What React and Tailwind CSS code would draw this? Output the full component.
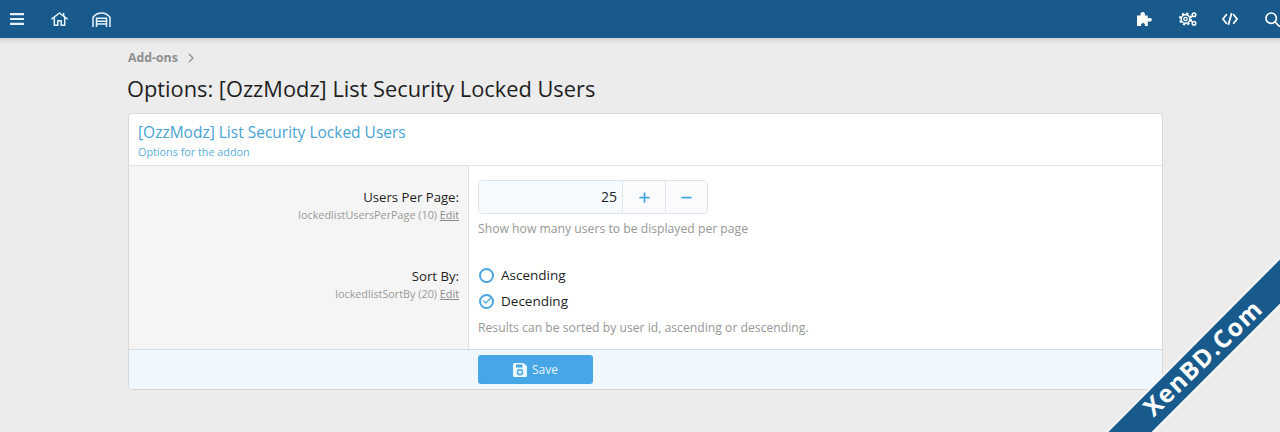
import React from "react";
import { Plus, Minus, Check } from "lucide-react";

function MenuBars() {
  return (
    <svg width="14" height="12" viewBox="0 0 14 12" fill="currentColor">
      <rect x="0" y="0" width="14" height="2.200" rx="0.500" />
      <rect x="0" y="4.900" width="14" height="2.200" rx="0.500" />
      <rect x="0" y="9.800" width="14" height="2.200" rx="0.500" />
    </svg>
  );
}

function HomeIcon() {
  return (
    <svg width="17" height="14" viewBox="0 0 17 14" fill="none" stroke="currentColor" strokeWidth="1.500" strokeLinejoin="round" strokeLinecap="round">
      <path d="M.8 6.800 8.500 1l7.700 5.800" />
      <path d="M3.300 5.500v7.700h3.500V8.800h3.400v4.400h3.500V5.500" />
      <path d="M12.600 1.500v2.500" />
    </svg>
  );
}

function Garage() {
  return (
    <svg width="19" height="15" viewBox="0 0 19 15" fill="none" stroke="currentColor" strokeWidth="1.500">
      <path d="M1 15V5.200C3.500 2.300 6.500 1 9.500 1s6 1.300 8.500 4.200V15" strokeLinejoin="round" />
      <path d="M4.500 15V6.300h10V15M4.500 9.200h10M4.500 12h10" />
    </svg>
  );
}

function Cogs() {
  return (
    <svg width="18" height="14" viewBox="0 0 18 14" fill="none" stroke="currentColor">
      <circle cx="6.500" cy="7" r="4.300" strokeWidth="1.500" />
      <circle cx="6.500" cy="7" r="5.600" strokeWidth="1.800" strokeDasharray="2.400 2.000" />
      <circle cx="6.500" cy="7" r="1.700" strokeWidth="1.300" />
      <path d="M11 5.500l2.500-1.500M11 8.500l2.500 1.500" strokeWidth="1.300" />
      <circle cx="15" cy="2.800" r="1.800" strokeWidth="1.500" />
      <circle cx="15" cy="11.200" r="1.800" strokeWidth="1.500" />
    </svg>
  );
}

function PuzzleSolid() {
  return (
    <svg width="17" height="14" viewBox="0 0 17 14" fill="currentColor">
      <path d="M0 3.500h3.800C3 2.300 3.500.2 5.600 0c2.200-.2 2.900 2.300 2 3.500h3.200v3.200c1.300-1 3.700-1 4 .8.400 2-2.500 2.800-4 1.600V14H7.600c.8-1 .3-3-1.500-3S3.600 13 4.300 14H0z" />
    </svg>
  );
}

function CodeIcon() {
  return (
    <svg width="16" height="12" viewBox="0 0 16 12" fill="none" stroke="currentColor" strokeWidth="1.800" strokeLinecap="round" strokeLinejoin="round">
      <path d="M4.300 1.800.9 6l3.400 4.200M11.700 1.800 15.100 6l-3.400 4.200M9.400.9 6.600 11.100" />
    </svg>
  );
}

function SearchIcon() {
  return (
    <svg width="15" height="15" viewBox="0 0 15 15" fill="none" stroke="currentColor" strokeWidth="1.700" strokeLinecap="round">
      <circle cx="6.200" cy="6.200" r="5.200" />
      <path d="M10 10l4.500 4.500" />
    </svg>
  );
}

function SaveIcon() {
  return (
    <svg width="14" height="14" viewBox="0 0 14 14">
      <path d="M1.500 0h9L14 3.300V12.500A1.500 1.500 0 0 1 12.500 14h-11A1.500 1.500 0 0 1 0 12.500v-11A1.500 1.500 0 0 1 1.500 0z" fill="#eef8ff" />
      <path d="M3 1.500h6.500v3H3z" fill="#47a7e6" />
      <circle cx="7" cy="9.300" r="2.500" fill="none" stroke="#47a7e6" strokeWidth="1.400" />
    </svg>
  );
}

function OptionRow({ children, left }) {
  return (
    <div className="flex">
      <div className="w-[340px] shrink-0 border-r border-[#dfdfdf] bg-[#f5f5f5] pr-[9px] text-right">{left}</div>
      <div className="flex-1 pl-[9px]">{children}</div>
    </div>
  );
}

function Label({ title, name, top }) {
  return (
    <div className={top}>
      <div className="text-[13.200px] leading-[20px] text-[#1e1e1e]">{title}</div>
      <div className="text-[10.800px] leading-[16px] text-[#9a9a9a]">
        {name} <span className="text-[#8c8c8c] underline">Edit</span>
      </div>
    </div>
  );
}

export default function App() {
  return (
    <div className="relative h-[432px] w-[1280px] overflow-hidden bg-[#ececec] font-['Open_Sans','Noto_Sans',sans-serif]">
      <header className="relative flex h-[38px] items-center justify-between overflow-hidden bg-[#185a8c] text-[#e8f4fb]">
        <div className="flex items-center">
          <div className="ml-[10px] flex"><MenuBars /></div>
          <div className="ml-[27px] flex"><HomeIcon /></div>
          <div className="ml-[24px] flex"><Garage /></div>
        </div>
        <div className="flex items-center text-white">
          <div className="flex"><PuzzleSolid /></div>
          <div className="ml-[25px] flex"><Cogs /></div>
          <div className="ml-[25px] flex"><CodeIcon /></div>
          <div className="ml-[27px] flex"><SearchIcon /></div>
        </div>
      </header>
      <div className="h-[6px] bg-gradient-to-b from-[#d2d2d2] to-[#ececec]" />

      <div className="ml-[127px] w-[1036px]">
        <nav className="mt-[6px] flex h-[16px] items-center pl-[1px] text-[12.300px] font-bold text-[#8f8f8f]">
          Add-ons
          <svg className="ml-[10px]" width="6" height="10" viewBox="0 0 6 10" fill="none" stroke="#8f8f8f" strokeWidth="1.300"><path d="M1 1l4 4-4 4" /></svg>
        </nav>
        <h1 className="mt-[8px] text-[21.800px] leading-[30px] text-[#1e1e1e]">Options: [OzzModz] List Security Locked Users</h1>

        <section className="ml-[1px] mt-[9px] overflow-hidden rounded-[4px] border border-[#d8d8d8] bg-white">
          <div className="h-[52px] border-b border-[#e3e3e3] pl-[9px] pt-[7px]">
            <div className="text-[15.500px] leading-[22px] text-[#48a3d4]">[OzzModz] List Security Locked Users</div>
            <div className="mt-[1px] text-[10.800px] leading-[15px] text-[#5aaedb]">Options for the addon</div>
          </div>

          <OptionRow left={<Label top="pt-[21px]" title="Users Per Page:" name="lockedlistUsersPerPage (10)" />}>
            <div className="h-[93px] pt-[14px]">
              <div className="flex h-[34px] w-[230px] overflow-hidden rounded-[4px] border border-[#dde3e8] text-[#1e1e1e]">
                <div className="flex-1 bg-[#f5fbff] pr-[5px] text-right text-[14px] leading-[32px]">25</div>
                <div className="flex w-[43px] items-center justify-center border-l border-[#e3e6e8] bg-[#f9fbfc]"><Plus size={15} strokeWidth={2.800} className="text-[#47a7e3]" /></div>
                <div className="flex w-[42px] items-center justify-center border-l border-[#e3e6e8] bg-[#f9fbfc]"><Minus size={15} strokeWidth={2.800} className="text-[#47a7e3]" /></div>
              </div>
              <p className="mt-[6px] text-[12.200px] leading-[17px] text-[#979797]">Show how many users to be displayed per page</p>
            </div>
          </OptionRow>

          <OptionRow left={<Label top="pt-[7px]" title="Sort By:" name="lockedlistSortBy (20)" />}>
            <div className="h-[90px] pl-[1px] pt-[3px]">
              <div className="flex h-[26px] items-center gap-[7px] text-[13.500px] text-[#1e1e1e]">
                <span className="h-[15px] w-[15px] rounded-full border-[2px] border-[#4ba6dd]" />
                Ascending
              </div>
              <div className="flex h-[26px] items-center gap-[7px] text-[13.500px] text-[#1e1e1e]">
                <span className="flex h-[15px] w-[15px] items-center justify-center rounded-full border-[2px] border-[#4ba6dd]"><Check size={10} strokeWidth={3} className="text-[#4ba6dd]" /></span>
                Decending
              </div>
              <p className="-ml-[1px] mt-[5px] text-[12.200px] leading-[17px] text-[#979797]">Results can be sorted by user id, ascending or descending.</p>
            </div>
          </OptionRow>

          <div className="flex h-[40px] items-center border-t border-[#d8dcdf] bg-[#f0f8fd] pl-[349px]">
            <button className="flex h-[29px] w-[115px] items-center justify-center gap-[5px] rounded-[3px] bg-[#47a7e6] text-[12px] text-[#e6f4fd]">
              <SaveIcon />
              Save
            </button>
          </div>
        </section>
      </div>

      <svg className="pointer-events-none absolute bottom-0 right-0" width="180" height="180" viewBox="0 0 180 180">
        <polygon points="181,5 181,52 52,181 6,181" fill="#185a8c" stroke="#f6f6f6" strokeWidth="2" />
      </svg>
      <div className="pointer-events-none absolute left-[1129px] top-[351px] w-[130px] -rotate-[44deg] text-center text-[24.500px] font-bold leading-[30px] tracking-[1.200px] text-white">
        XenBD.Com
      </div>
    </div>
  );
}
